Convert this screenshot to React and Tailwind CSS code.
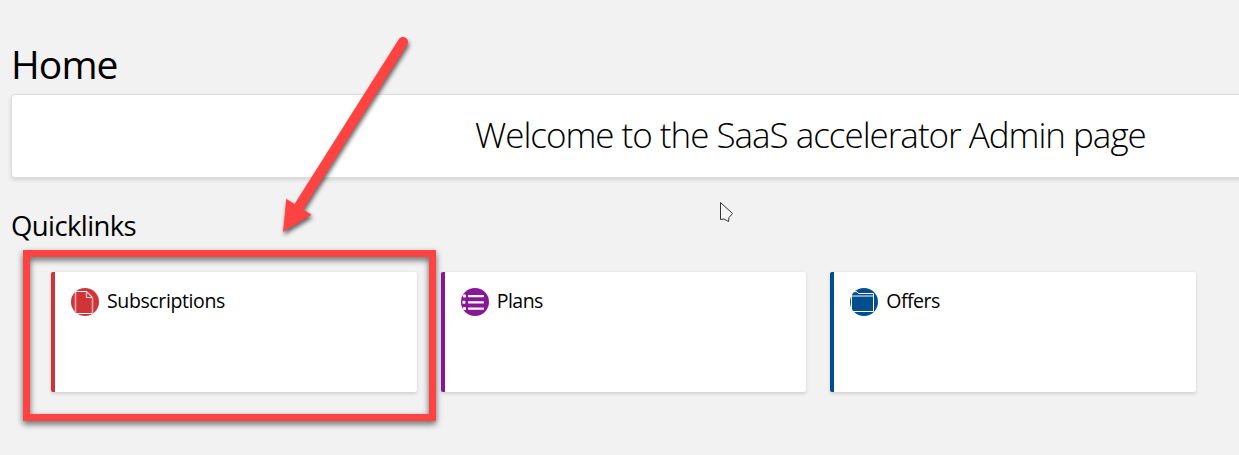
const DocumentIcon = () => (
  <svg viewBox="0 0 28 28" className="size-7 shrink-0" fill="none">
    <circle cx="14" cy="14" r="14" fill="#d13438" />
    <path d="M4.5 4v21M21.5 10v15" stroke="#eda9ab" strokeWidth="1.6" />
    <path d="M4 3.5h11.5M4.5 25.5h17" stroke="#fff" strokeWidth="1" />
    <path d="M15.5 3.5v6h6M15.5 3.5l6 6" stroke="#f6d0d1" strokeWidth="1.2" />
  </svg>
);

const ListIcon = () => (
  <svg viewBox="0 0 28 28" className="size-7 shrink-0" fill="#fff">
    <circle cx="14" cy="14" r="14" fill="#881798" />
    <rect x="7" y="7" width="16" height="2.2" rx="0.6" />
    <rect x="7" y="13.2" width="16" height="2.2" rx="0.6" />
    <rect x="7" y="19.5" width="16" height="2.2" rx="0.6" />
    <rect x="2" y="6.6" width="3" height="3" rx="0.8" />
    <rect x="1.4" y="12.8" width="3" height="3" rx="0.8" />
    <rect x="2" y="19.1" width="3" height="3" rx="0.8" />
  </svg>
);

const FolderIcon = () => (
  <svg viewBox="0 0 28 28" className="size-7 shrink-0" fill="none">
    <circle cx="14" cy="14" r="14" fill="#004e8c" />
    <path d="M1.5 6v18" stroke="#fff" strokeWidth="1" />
    <path d="M2 23.5h21.5v-18H8.5L7 3.7H4" stroke="#fff" strokeWidth="1" />
    <path d="M2 8h21" stroke="#7fa6c5" strokeWidth="2" />
  </svg>
);

const links = [
  { label: "Subscriptions", Icon: DocumentIcon, border: "border-[#d13438]", text: "tracking-[-0.38px]" },
  { label: "Plans", Icon: ListIcon, border: "border-[#881798]", text: "tracking-[-0.5px]" },
  { label: "Offers", Icon: FolderIcon, border: "border-[#004e8c]", text: "tracking-[-0.5px]" },
];

export default function App() {
  return (
    <div className="relative h-[455px] w-full overflow-hidden bg-[#f2f2f2] pt-10 pl-[11px] font-['Open_Sans','Noto_Sans',sans-serif] text-black">
      <h1 className="text-[39px] leading-[48px] tracking-[-0.9px] whitespace-nowrap">Home</h1>
      <section className="mt-1.5 flex h-[84px] w-[1600px] rounded border border-[#dedede] bg-white pt-[19px] pl-[463px] shadow-[0_2px_4px_rgba(0,0,0,0.13)]">
        <p className="text-[35px] leading-[42px] font-light tracking-[-1.02px] whitespace-nowrap">
          Welcome to the SaaS accelerator Admin page
        </p>
      </section>
      <h2 className="mt-[31px] text-[27.5px] leading-[34px] tracking-[-0.6px] whitespace-nowrap">Quicklinks</h2>
      <div className="mt-[29px] ml-10 grid w-[1145px] grid-cols-3 gap-6">
        {links.map(({ label, Icon, border, text }) => (
          <a
            key={label}
            className={`flex h-[120px] items-start rounded-xs border-l-4 bg-white pt-4 pl-4 shadow-[0_1.6px_3.6px_rgba(0,0,0,0.13),0_0_1px_rgba(0,0,0,0.1)] ${border}`}
          >
            <Icon />
            <span className={`-mt-px ml-2 text-[19.5px] leading-7 whitespace-nowrap ${text}`}>{label}</span>
          </a>
        ))}
      </div>
      <div className="absolute top-[250px] left-[23px] h-[171px] w-[413px] border-[7px] border-[#ff4343] drop-shadow-[0_3px_3px_rgba(0,0,0,0.6)]" />
      <svg
        viewBox="0 0 180 225"
        className="absolute top-[25px] left-[260px] h-[225px] w-[180px] drop-shadow-[1px_3px_2px_rgba(0,0,0,0.6)]"
      >
        <path d="M143 17L38 183" stroke="#ff4343" strokeWidth="10" strokeLinecap="round" />
        <path d="M26.3 173.7L51.7 189.7L23 207Z" fill="#ff4343" />
      </svg>
      <svg viewBox="0 0 16 22" className="absolute top-[201px] left-[719px] h-[22px] w-4" fill="#f4f4f4" stroke="#333" strokeWidth="1">
        <path d="M1.5 1.5v17l3.5-.5 4.5 2.5.5-4 3.5-4z" />
      </svg>
    </div>
  );
}
